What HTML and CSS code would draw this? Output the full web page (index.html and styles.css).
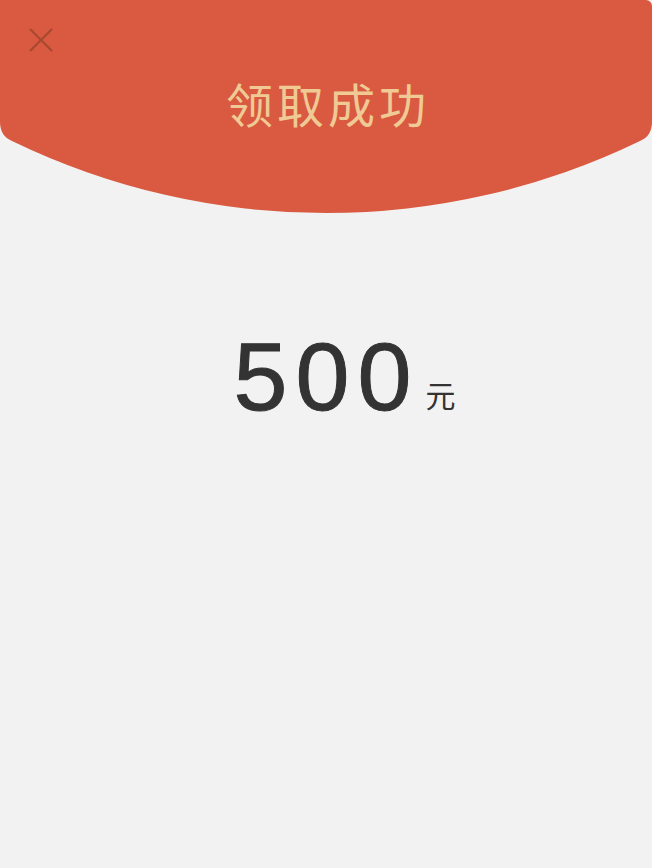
FILE: index.html
```html
<!DOCTYPE html>
<html lang="zh">
<head>
<meta charset="utf-8">
<link rel="stylesheet" href="styles.css">
</head>
<body>
<div class="page">
  <header class="banner">
    <button class="close" aria-label="关闭">
      <svg width="26" height="26" viewBox="0 0 26 26"><path d="M2 2L24 24M24 2L2 24" stroke="#A9482F" stroke-width="2.2" fill="none"/></svg>
    </button>
    <h1 class="title">领取成功</h1>
  </header>
  <div class="amount">
    <span class="spacer"></span>
    <span class="num">500</span>
    <span class="unit">元</span>
  </div>
</div>
</body>
</html>
```

FILE: styles.css
```css
html, body {
  margin: 0;
  padding: 0;
  background: #f2f2f2;
}
.page {
  width: 652px;
  height: 868px;
  background: #f2f2f2;
  font-family: "Liberation Sans", "Noto Sans CJK SC", sans-serif;
  overflow: hidden;
}
.banner {
  height: 214px;
  background: #d95a40;
  clip-path: path("M0 0 H646 A6 6 0 0 1 652 6 V122 Q652 136 640 141 A720 720 0 0 1 12 141 Q0 136 0 122 Z");
  display: flex;
  flex-direction: column;
  align-items: center;
}
.close {
  align-self: flex-start;
  margin: 27px 0 0 28px;
  padding: 0;
  border: 0;
  background: none;
  width: 26px;
  height: 26px;
  display: flex;
}
.title {
  margin: 22px 0 0;
  font-family: "Noto Sans CJK SC", sans-serif;
  font-weight: 400;
  font-size: 47px;
  line-height: 56px;
  letter-spacing: 4px;
  padding-left: 4px;
  color: #efca94;
}
.amount {
  margin-top: 108px;
  display: grid;
  grid-template-columns: 1fr auto 1fr;
  align-items: baseline;
  color: #333;
}
.num {
  font-size: 97px;
  line-height: 110px;
  letter-spacing: 8px;
  padding-left: 1px;
  -webkit-text-stroke: 1px #333;
}
.unit {
  font-family: "Noto Sans CJK SC", sans-serif;
  font-size: 30px;
  margin-left: 6px;
  color: #333;
  transform: translateY(-3px);
}
```
